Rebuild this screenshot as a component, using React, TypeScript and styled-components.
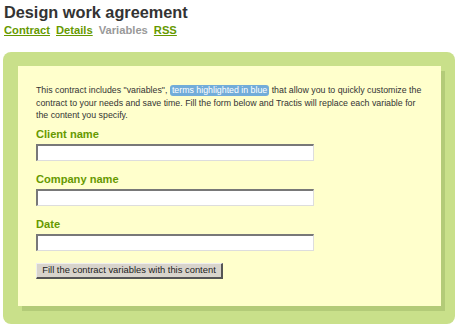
import styled, { createGlobalStyle } from "styled-components";

const GlobalStyle = createGlobalStyle`
  html, body {
    margin: 0;
    padding: 0;
    background: #ffffff;
  }
  body {
    font-family: "Liberation Sans", Arial, sans-serif;
  }
`;

const fields = ["Client name", "Company name", "Date"];

const App: React.FC = () => {
  return (
    <Page>
      <GlobalStyle />
      <Title>Design work agreement</Title>
      <Nav>
        <NavLink href="#">Contract</NavLink>
        <NavLink href="#">Details</NavLink>
        <NavLink $current>Variables</NavLink>
        <NavLink href="#">RSS</NavLink>
      </Nav>
      <Frame>
        <Card>
          <Intro>
            This contract includes "variables",{" "}
            <Highlight>terms highlighted in blue</Highlight> that allow you to
            quickly customize the contract to your needs and save time. Fill the
            form below and Tractis will replace each variable for the content you
            specify.
          </Intro>
          {fields.map((f) => (
            <Field key={f}>
              <Label>{f}</Label>
              <Input type="text" />
            </Field>
          ))}
          <Button type="button">Fill the contract variables with this content</Button>
        </Card>
      </Frame>
    </Page>
  );
};

export default App;

const Page = styled.div`
  width: 460px;
  height: 330px;
  padding: 3px 0 0 3px;
  box-sizing: border-box;
  overflow: hidden;
`;

const Title = styled.h1`
  margin: 0 0 0 1px;
  font-size: 16.3px;
  line-height: 18px;
  font-weight: 700;
  color: #333333;
`;

const Nav = styled.div`
  display: flex;
  gap: 6px;
  margin: 3px 0 0 1px;
  height: 16px;
`;

const NavLink = styled.a<{ $current?: boolean }>`
  font-size: 11.2px;
  line-height: 13px;
  font-weight: 700;
  color: ${(p) => (p.$current ? "#999999" : "#669900")};
  text-decoration: ${(p) => (p.$current ? "none" : "underline")};
  text-decoration-thickness: 1px;
  text-underline-offset: 1px;
`;

const Frame = styled.div`
  width: 452px;
  height: 272px;
  margin-top: 12px;
  padding: 14px 14px 18px 15px;
  box-sizing: border-box;
  background: #c9e08a;
  border-radius: 8px;
`;

const Card = styled.div`
  width: 423px;
  height: 240px;
  padding: 18px 18px 0 18px;
  box-sizing: border-box;
  background: #ffffcc;
  box-shadow: 4px 5px 0 #b3cb78;
`;

const Intro = styled.p`
  margin: 0 0 6px 0;
  font-size: 8.8px;
  line-height: 12.5px;
  color: #333333;
`;

const Highlight = styled.span`
  display: inline-block;
  line-height: 11px;
  background: #72acd9;
  color: #ffffff;
  border-radius: 3px;
  padding: 0 2px;
`;

const Field = styled.div`
  display: flex;
  flex-direction: column;
  gap: 3px;
  margin-bottom: 12px;
`;

const Label = styled.label`
  font-size: 11.1px;
  line-height: 13px;
  font-weight: 700;
  color: #669900;
`;

const Input = styled.input`
  width: 278px;
  height: 17px;
  box-sizing: border-box;
  margin: 0;
  padding: 0 2px;
  background: #ffffff;
  border-style: solid;
  border-width: 2px 1px 1px 2px;
  border-color: #787878 #dddddd #dddddd #787878;
  outline: none;
`;

const Button = styled.button`
  display: block;
  width: 187px;
  height: 16px;
  padding: 0;
  margin: 0;
  box-sizing: border-box;
  background: #d8d4cc;
  border-style: solid;
  border-width: 1px 2px 2px 1px;
  border-color: #eeeeee #555555 #555555 #eeeeee;
  font-family: "Liberation Sans", Arial, sans-serif;
  font-size: 9.4px;
  line-height: 12px;
  color: #222222;
`;
